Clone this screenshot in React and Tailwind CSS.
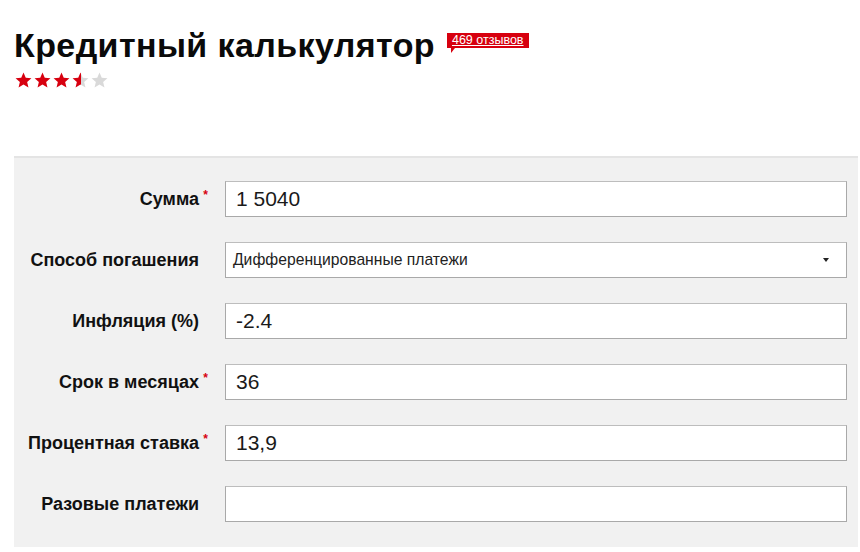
import React from "react";

const font = { fontFamily: '"Liberation Sans", Arial, sans-serif' };

function Star({ fill = "full" }) {
  // full | half | empty
  const id = "half-grad";
  return (
    <svg width="19" height="16" viewBox="0 0 24 22" className="block">
      {fill === "half" && (
        <defs>
          <linearGradient id={id} x1="0" x2="1" y1="0" y2="0">
            <stop offset="50%" stopColor="#d7000f" />
            <stop offset="50%" stopColor="#d9d9d9" />
          </linearGradient>
        </defs>
      )}
      <path
        d="M12 0.8l3.1 7.2 7.8 0.6-5.9 5.1 1.8 7.6L12 17.2l-6.8 4.1 1.8-7.6L1.1 8.6l7.8-0.6z"
        fill={fill === "full" ? "#d7000f" : fill === "half" ? `url(#${id})` : "#d9d9d9"}
      />
    </svg>
  );
}

const rows = [
  { label: "Сумма", required: true, value: "1 5040" },
  { label: "Способ погашения", select: true, value: "Дифференцированные платежи" },
  { label: "Инфляция (%)", value: "-2.4" },
  { label: "Срок в месяцах", required: true, value: "36" },
  { label: "Процентная ставка", required: true, value: "13,9" },
  { label: "Разовые платежи", value: "" },
];

export default function App() {
  return (
    <div className="w-[860px] h-[552px] bg-white overflow-hidden text-[#111]" style={font}>
      {/* header */}
      <div className="pl-[14px] pt-[25px]">
        <div className="flex items-start">
          <h1 className="text-[34px] font-bold leading-[40px] tracking-[0.4px] text-[#0a0a0a]">Кредитный калькулятор</h1>
          <div className="relative ml-[12px] mt-[8px]">
            <span className="block bg-[#d7000f] text-white text-[12.5px] leading-[15px] px-[5px] underline decoration-1 underline-offset-1">
              469 отзывов
            </span>
            <span className="absolute left-[4px] top-[15px] w-0 h-0 border-t-[5px] border-t-[#d7000f] border-r-[4px] border-r-transparent" />
          </div>
        </div>
        <div className="flex mt-[7px]">
          <Star />
          <Star />
          <Star />
          <Star fill="half" />
          <Star fill="empty" />
        </div>
      </div>

      {/* form panel */}
      <div className="ml-[14px] mr-[2px] mt-[68px] bg-[#f1f1f1] border-t-2 border-[#e4e4e4] pt-[23px] pb-[25px]">
        <div className="flex flex-col gap-[25px]">
          {rows.map((r) => (
            <div key={r.label} className="flex items-center">
              <div className="w-[211px] shrink-0 flex justify-end pr-[26px]">
                <span className="text-[18px] font-bold text-[#111] relative">
                  {r.label}
                  {r.required && (
                    <span className="absolute -right-[9px] top-[3px] leading-none text-[#d7000f] text-[12px] font-bold">*</span>
                  )}
                </span>
              </div>
              {r.select ? (
                <div className="w-[622px] h-[36px] bg-white border border-[#a9a9a9] border-t-[#bdbdbd] flex items-center justify-between pl-[7px] pr-[17px]">
                  <span className="text-[15.7px] text-[#222]">{r.value}</span>
                  <span className="w-0 h-0 border-l-[3px] border-r-[3px] border-t-[4px] border-l-transparent border-r-transparent border-t-[#222]" />
                </div>
              ) : (
                <div className="w-[622px] h-[36px] bg-white border border-[#a9a9a9] border-t-[#bdbdbd] flex items-center pl-[10px]">
                  <span className="text-[21px] text-[#1a1a1a]">{r.value}</span>
                </div>
              )}
            </div>
          ))}
        </div>
      </div>
    </div>
  );
}
